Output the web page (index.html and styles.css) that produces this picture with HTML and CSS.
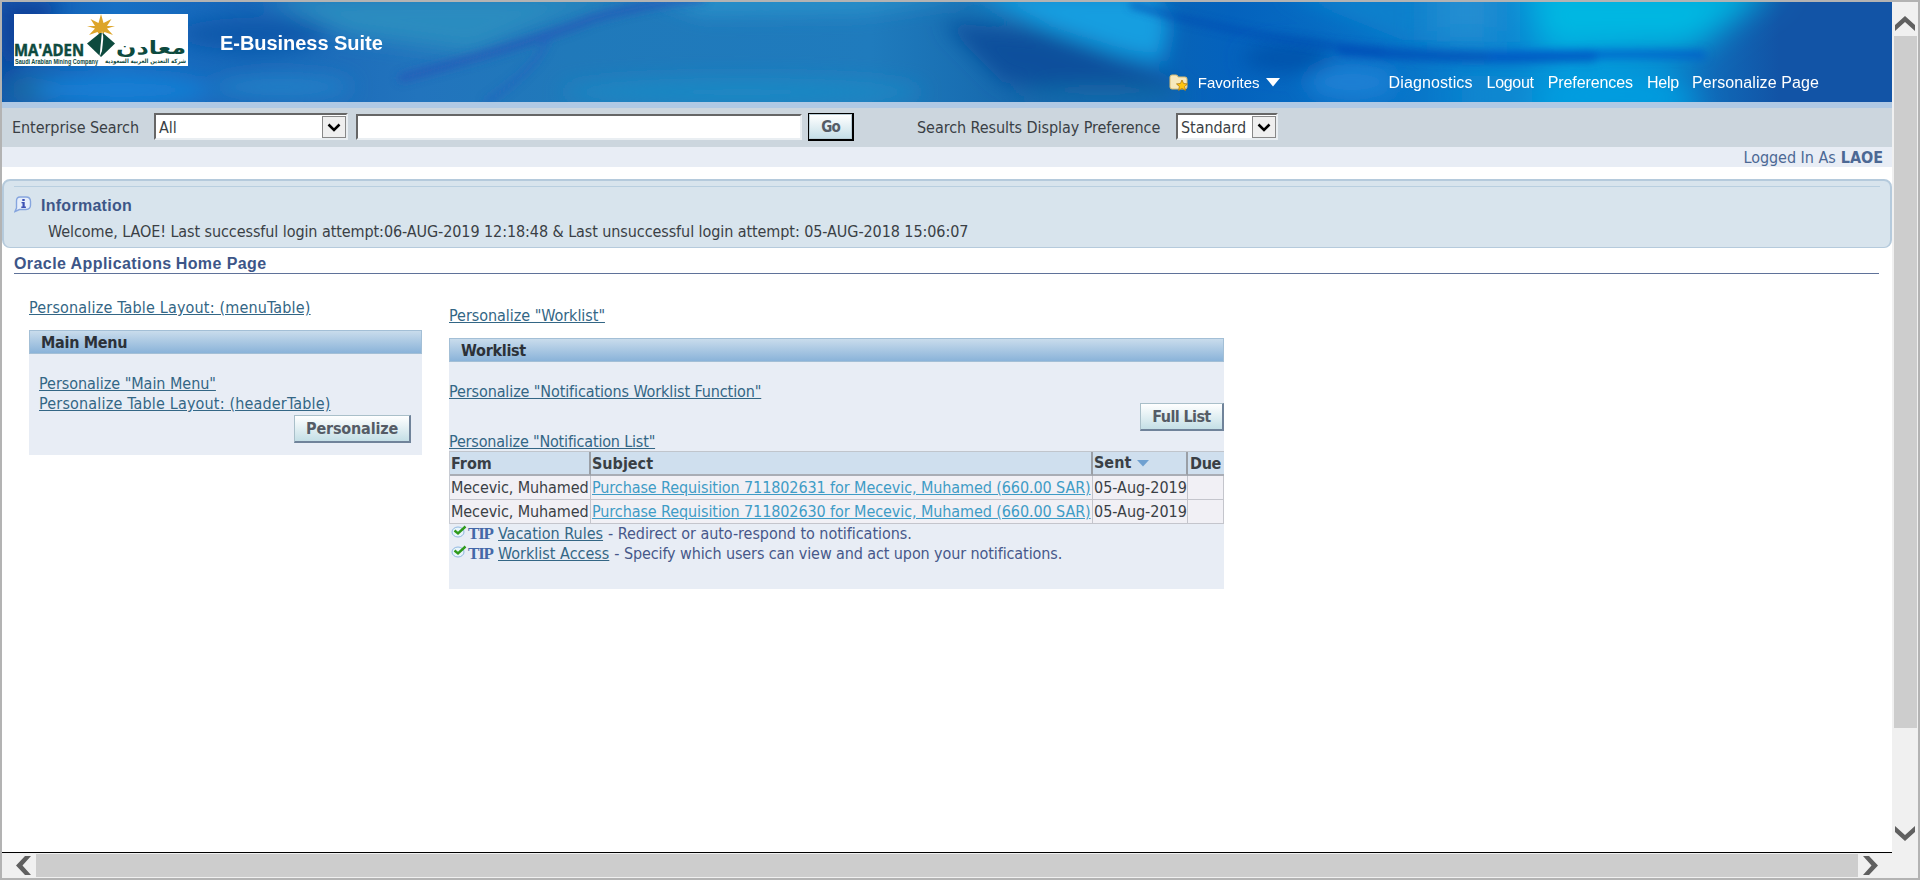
FILE: index.html
```html
<!DOCTYPE html>
<html lang="en">
<head>
<meta charset="utf-8">
<title>Oracle Applications Home Page</title>
<link rel="stylesheet" href="styles.css">
</head>
<body>
<div class="window">
  <div class="page">
    <header class="banner">
      <svg class="banner-art" viewBox="0 0 1890 100" preserveAspectRatio="none">
        <defs>
          <linearGradient id="base" x1="0" x2="1">
            <stop offset="0" stop-color="#115aae"/><stop offset=".06" stop-color="#166fc4"/>
            <stop offset=".13" stop-color="#1866b8"/><stop offset=".22" stop-color="#2274bd"/>
            <stop offset=".3" stop-color="#2079ba"/><stop offset=".46" stop-color="#1f7bbd"/>
            <stop offset=".54" stop-color="#1567ac"/><stop offset=".6" stop-color="#0a64b4"/>
            <stop offset=".65" stop-color="#0462bd"/><stop offset=".74" stop-color="#0874c8"/>
            <stop offset=".83" stop-color="#0890d6"/><stop offset=".9" stop-color="#0f6cba"/>
            <stop offset=".94" stop-color="#1254a6"/><stop offset="1" stop-color="#1254a6"/>
          </linearGradient>
          <filter id="b3" x="-20%" y="-50%" width="140%" height="200%"><feGaussianBlur stdDeviation="4"/></filter>
          <filter id="b8" x="-30%" y="-80%" width="160%" height="260%"><feGaussianBlur stdDeviation="10"/></filter>
          <filter id="b16" x="-50%" y="-100%" width="200%" height="300%"><feGaussianBlur stdDeviation="16"/></filter>
        </defs>
        <rect width="1890" height="100" fill="url(#base)"/>
        <g filter="url(#b8)">
          <path d="M0 0H60L12 60L0 100Z" fill="#0b3f99"/>
          <ellipse cx="40" cy="88" rx="38" ry="14" fill="#1a6aa4"/>
          <ellipse cx="120" cy="88" rx="90" ry="14" fill="#1580d6"/>
          <ellipse cx="250" cy="32" rx="75" ry="16" fill="#1058aa"/>
          <path d="M260 -5H630L560 12L470 50L350 34Z" fill="#2c8cc0"/>
          <ellipse cx="280" cy="85" rx="70" ry="12" fill="#2380c8"/>
          <path d="M640 -10H1000L860 10L700 12Z" fill="#2b93cb"/>
          <ellipse cx="740" cy="90" rx="180" ry="14" fill="#1c88c4"/>
          <path d="M940 20L1040 30L1150 70L1180 85L1090 92L1000 80Z" fill="#0c509c"/>
          <ellipse cx="1100" cy="92" rx="85" ry="10" fill="#186aa8"/>
          <path d="M960 -10H1150L1168 20L1160 60L1120 52L1050 28Z" fill="#129ee0"/>
          <ellipse cx="1285" cy="56" rx="45" ry="15" fill="#0652ac"/>
          <ellipse cx="1350" cy="80" rx="45" ry="18" fill="#1c80d4"/>
          <path d="M1280 -10H1480V40L1400 38Z" fill="#0880cc"/>
        </g>
        <g filter="url(#b16)">
          <path d="M1430 -20H1500V40H1430Z" fill="#238ed2"/>
          <path d="M1525 -20H1780L1690 48H1540Z" fill="#00b8e2"/>
          <path d="M1540 75Q1620 55 1680 75L1700 120H1530Z" fill="#009ee0"/>
          <path d="M1460 75H1530V110H1460Z" fill="#1088d0"/>
        </g>
        <g filter="url(#b3)" fill="none" stroke-linecap="round">
          <path d="M400 76Q540 38 590 17Q640 2 700 -4" stroke="#2458b8" stroke-width="8" opacity=".8"/>
          <path d="M545 33Q545 58 485 100" stroke="#2361be" stroke-width="6" opacity=".65"/>
          <path d="M1130 3Q1270 42 1380 48" stroke="#034ab2" stroke-width="5" opacity=".85"/>
          <path d="M1340 48Q1450 58 1590 54" stroke="#064cb6" stroke-width="11" opacity=".8"/>
          <path d="M1490 54Q1600 51 1700 53" stroke="#035ac8" stroke-width="9" opacity=".75"/>
        </g>
      </svg>
      <svg class="logo" viewBox="0 0 174 52">
        <rect width="174" height="52" fill="#fff"/>
        <path d="M87 0l2.500 9 8-4-4.500 7h8l-8 2.500 6 6.500-8.500-3-3.500 5-3.500-5-8.500 3 6-6.500-8-2.500h8l-4.500-7 8 4z" fill="#dda52a"/>
        <path d="M86 19L73 29.500L87 43L101 29.500L89 19Z" fill="#0d4a3e"/>
        <path d="M88 17L85.500 43L91 30Z" fill="#fff"/>
        <path d="M89.500 22L87.500 42L95 33Z" fill="#0d4a3e"/>
        <text x="0" y="41.500" class="logo-name" textLength="70" lengthAdjust="spacingAndGlyphs">MA'ADEN</text>
        <text x="1" y="50" class="logo-sub" textLength="83" lengthAdjust="spacingAndGlyphs">Saudi Arabian Mining Company</text>
        <text x="102" y="40" class="logo-ar" textLength="70" lengthAdjust="spacingAndGlyphs">معادن</text>
        <text x="91" y="49" class="logo-ar-sub" textLength="81" lengthAdjust="spacingAndGlyphs">شركة التعدين العربية السعودية</text>
      </svg>
      <h1 class="suite">E-Business Suite</h1>
      <nav class="top-nav">
        <a class="fav">
          <svg class="fav-icon" width="20" height="18" viewBox="0 0 20 18"><path d="M1 3Q1 1 3 1H7Q9 1 9 3H16Q18 3 18 5V13Q18 15 16 15H3Q1 15 1 13Z" fill="#f7e9bd" stroke="#d9bd72"/><path d="M13 6l1.600 3.500 3.900.4-2.900 2.600.8 3.900-3.400-2-3.400 2 .8-3.900-2.900-2.600 3.900-.4z" fill="#ffc50d" stroke="#b07a10" stroke-width=".8"/></svg>
          <span class="fav-label">Favorites</span>
          <svg width="14" height="9" viewBox="0 0 14 9"><path d="M0 0H14L7 8.500Z" fill="#fff"/></svg>
        </a>
        <a class="nv-diag">Diagnostics</a><a class="nv-out">Logout</a><a class="nv-pref">Preferences</a><a class="nv-help">Help</a><a class="nv-page">Personalize Page</a>
      </nav>
    </header>

    <div class="search-bar">
      <span class="search-label">Enterprise Search</span>
      <div class="select select-all"><span>All</span><i class="drop"><svg width="14" height="9" viewBox="0 0 14 9"><path d="M1.500 1.500L7 7L12.500 1.500" fill="none" stroke="#000" stroke-width="2.500"/></svg></i></div>
      <div class="search-input"></div>
      <button class="go"><span>Go</span></button>
      <span class="pref-label">Search Results Display Preference</span>
      <div class="select select-std"><span>Standard</span><i class="drop"><svg width="14" height="9" viewBox="0 0 14 9"><path d="M1.500 1.500L7 7L12.500 1.500" fill="none" stroke="#000" stroke-width="2.500"/></svg></i></div>
    </div>
    <div class="user-bar"><span>Logged In As</span> <b>LAOE</b></div>

    <section class="info">
      <div class="info-head">
        <svg width="18" height="17" viewBox="0 0 18 17"><path d="M6 1H12Q16.500 1 16.500 5.500V9Q16.500 13.500 12 13.500H5.500L1 15.500L2.500 12V5Q2.500 1 6 1Z" fill="#e6eefb" stroke="#86a5de" stroke-width="1.400"/><path d="M8.300 3h2.400v2H8.300zM7.500 6h3.200v4.500h1.200V12H7.300v-1.500h1.200V7.200h-1z" fill="#3c50b4"/></svg>
        <h2>Information</h2>
      </div>
      <p>Welcome, LAOE! Last successful login attempt:06-AUG-2019 12:18:48 &amp; Last unsuccessful login attempt: 05-AUG-2018 15:06:07</p>
    </section>

    <h2 class="title"><span>Oracle Applications</span><span>Home Page</span></h2>

    <main class="columns">
      <section class="menu-col">
        <a class="link wide">Personalize Table Layout: (menuTable)</a>
        <div class="panel menu-panel">
          <h3 class="panel-head">Main Menu</h3>
          <div class="menu-links">
            <a class="link main-link">Personalize "Main Menu"</a>
            <a class="link wide">Personalize Table Layout: (headerTable)</a>
          </div>
          <button class="btn btn-personalize">Personalize</button>
        </div>
      </section>
      <section class="work-col">
        <a class="link main-link">Personalize "Worklist"</a>
        <div class="panel work-panel">
          <h3 class="panel-head">Worklist</h3>
          <a class="link fn-link">Personalize "Notifications Worklist Function"</a>
          <button class="btn btn-full">Full List</button>
          <a class="link list-link">Personalize "Notification List"</a>
          <div class="grid">
            <div class="th">From</div><div class="th">Subject</div><div class="th sent">Sent <svg width="14" height="8" viewBox="0 0 14 8"><path d="M1 1H13L7 7.500Z" fill="#6fa0d0"/></svg></div><div class="th due">Due</div>
            <div class="td from">Mecevic, Muhamed</div><div class="td"><a class="req">Purchase Requisition 711802631 for Mecevic, Muhamed (660.00 SAR)</a></div><div class="td">05-Aug-2019</div><div class="td"></div>
            <div class="td from">Mecevic, Muhamed</div><div class="td"><a class="req">Purchase Requisition 711802630 for Mecevic, Muhamed (660.00 SAR)</a></div><div class="td">05-Aug-2019</div><div class="td"></div>
          </div>
          <div class="tip">
            <svg width="16" height="14" viewBox="0 0 16 14"><ellipse cx="7" cy="7" rx="6" ry="5" fill="#e8f4fb" stroke="#8fb8e0"/><path d="M3.500 5.500L7 8.500L14.500 1.500" fill="none" stroke="#2f9a1c" stroke-width="2.400"/></svg>
            <b>TIP</b><a class="link">Vacation Rules</a><span>- Redirect or auto-respond to notifications.</span>
          </div>
          <div class="tip">
            <svg width="16" height="14" viewBox="0 0 16 14"><ellipse cx="7" cy="7" rx="6" ry="5" fill="#e8f4fb" stroke="#8fb8e0"/><path d="M3.500 5.500L7 8.500L14.500 1.500" fill="none" stroke="#2f9a1c" stroke-width="2.400"/></svg>
            <b>TIP</b><a class="link">Worklist Access</a><span class="tip-long">- Specify which users can view and act upon your notifications.</span>
          </div>
        </div>
      </section>
    </main>
  </div>

  <div class="vscroll">
    <svg width="20" height="16" viewBox="0 0 20 16"><path d="M0 15V9L10 0L20 9V15L10 6Z" fill="#606060"/></svg>
    <div class="vthumb"></div>
    <svg width="20" height="16" viewBox="0 0 20 16"><path d="M0 1V7L10 16L20 7V1L10 10Z" fill="#606060"/></svg>
  </div>
  <div class="hscroll">
    <svg width="16" height="19" viewBox="0 0 16 19"><path d="M15 0H9L0 9.500L9 19H15L6.500 9.500Z" fill="#606060"/></svg>
    <div class="hthumb"></div>
    <svg width="16" height="19" viewBox="0 0 16 19"><path d="M1 0H7L16 9.500L7 19H1L9.500 9.500Z" fill="#606060"/></svg>
  </div>
</div>
</body>
</html>
```
FILE: styles.css
```css
* { box-sizing: border-box; }
body { margin: 0; background: #fff; font: 16px/20px "DejaVu Sans Condensed", "Noto Sans", sans-serif; color: #3a3f45; white-space: nowrap; }
h1, h2, h3, p { margin: 0; }
svg { display: block; flex: none; }
button { font: inherit; padding: 0; margin: 0; }

.window { width: 1920px; height: 880px; border: 2px solid #b3b3b3; display: grid; grid-template: 851px 25px / 1890px 26px; overflow: hidden; background: #f0f0f0; }
.page { background: #fff; border-bottom: 1px solid #000; overflow: hidden; }

.banner { position: relative; height: 100px; display: flex; align-items: flex-start; color: #fff; font-family: "Liberation Sans", Arial, sans-serif; }
.banner-art { position: absolute; inset: 0; width: 100%; height: 100%; }
.logo { position: relative; width: 174px; height: 52px; margin: 12px 0 0 12px; }
.logo text { fill: #0d4a3e; }
.logo-name { font: bold 16px "Open Sans", sans-serif; stroke: #0d4a3e; stroke-width: .5px; }
.logo-sub { font: bold 6.500px "Liberation Sans", sans-serif; }
.logo-ar { font: bold 18px "DejaVu Sans", sans-serif; }
.logo-ar-sub { font: bold 6px "DejaVu Sans", sans-serif; }
.suite { position: relative; margin: 30px 0 0 32px; font-size: 20px; line-height: 23px; letter-spacing: -.04px; }
.top-nav { position: relative; margin: 71px 73px 0 auto; display: flex; }
.fav { display: flex; align-items: center; margin-right: 109px; height: 19px; }
.fav-label { margin: 0 6px 0 9px; font-size: 15px; }
.nv-diag { letter-spacing: .12px; margin-right: 14px; }
.nv-out { letter-spacing: -.3px; margin-right: 14px; }
.nv-pref { letter-spacing: -.1px; margin-right: 14px; }
.nv-help { letter-spacing: -.2px; margin-right: 13px; }
.nv-page { letter-spacing: .1px; }

.search-bar { height: 45px; background: #ccd6de; border-top: 6px solid #b0c9e4; display: flex; align-items: flex-start; padding-left: 10px; }
.search-label, .pref-label { margin-top: 10px; letter-spacing: -.06px; }
.search-label { width: 142px; }
.pref-label { margin-left: 63px; width: 259px; }
.select { margin-top: 5px; height: 27px; background: #fff; border: 2px solid; border-color: #666 #e9eef2 #e9eef2 #666; display: flex; justify-content: space-between; padding: 1px 0 1px 3px; line-height: 24px; }
.select-all { width: 194px; }
.select-std { width: 102px; letter-spacing: -.06px; }
.drop { width: 24px; height: 22px; background: #efefef; border: 1px solid #888; display: grid; place-items: center; }
.search-input { width: 446px; height: 26px; margin: 6px 0 0 8px; background: #fff; border: 2px solid; border-color: #666 #e9eef2 #e9eef2 #666; }
.go { width: 46px; height: 28px; margin: 5px 0 0 6px; border: 1px solid #000; border-width: 1px 2px 2px 1px; background: #b9cdd6; padding: 1px; color: #555c66; font-weight: bold; font-size: 15px; letter-spacing: -1px; }
.go span { display: block; height: 23px; line-height: 24px; background: linear-gradient(#fff, #c6dfe8); }
.user-bar { height: 20px; line-height: 22px; background: #e8edf5; color: #4c6894; display: flex; justify-content: flex-end; gap: 5px; padding-right: 9px; letter-spacing: -.03px; }

.info { margin-top: 12px; height: 69px; background: #d8e4ed; border: 2px solid #b5cadc; border-bottom-width: 1px; border-radius: 8px; padding: 5px 10px 0; }
.info-head { border-top: 1px solid #b9cfe0; display: flex; gap: 9px; padding-top: 9px; }
.info-head h2 { font: bold 16px/19px "Liberation Sans", Arial, sans-serif; color: #3d5688; letter-spacing: .27px; }
.info p { margin: 7px 0 0 34px; letter-spacing: -.08px; }
.title { margin: 5px 13px 0 12px; height: 21px; border-bottom: 1px solid #5f7299; font: bold 16px/22px "Liberation Sans", Arial, sans-serif; color: #3d5688; display: flex; gap: 4px; letter-spacing: .42px; }

.columns { display: flex; align-items: flex-start; }
.menu-col { width: 393px; margin: 24px 27px 0 27px; }
.work-col { width: 775px; margin-top: 32px; }
.link { display: block; width: max-content; color: #336685; text-decoration: underline; letter-spacing: -.11px; }
.wide { letter-spacing: .17px; }
.main-link { letter-spacing: -.04px; }
.panel { background: #e8edf5; }
.panel-head { height: 24px; border: 1px solid #a3bfd6; background: linear-gradient(#c9dcec, #8ab3d9); font-size: 16px; line-height: 24px; letter-spacing: -.28px; padding-left: 11px; color: #2c3138; }
.menu-panel { margin-top: 12px; height: 125px; display: flex; flex-direction: column; }
.menu-links { padding: 20px 0 0 10px; }
.btn { height: 28px; border: 1px solid #a9bfc9; border-right: 2px solid #70839a; border-bottom: 2px solid #70839a; background: linear-gradient(#fff, #c4dfe6); font-weight: bold; color: #555c66; line-height: 23px; }
.btn-personalize { width: 117px; letter-spacing: -.17px; align-self: flex-end; margin: 1px 11px 0 0; }
.work-panel { margin-top: 12px; height: 251px; display: flex; flex-direction: column; }
.fn-link { margin-top: 20px; }
.btn-full { width: 84px; letter-spacing: -.6px; align-self: flex-end; margin-top: 1px; }
.list-link { margin-top: 1px; line-height: 19px; letter-spacing: -.18px; }

.grid { display: grid; grid-template-columns: 141px 502px 95px 36px; grid-template-rows: 24px 24px 24px; border-top: 1px solid #c0c5cc; border-left: 1px solid #c8ccd4; }
.th { background: #cfdfee; font-weight: bold; line-height: 24px; padding-left: 1px; border-bottom: 2px solid #a9adb5; border-right: 2px solid #9a9fa6; }
.due { border-right: 0; letter-spacing: -.3px; padding-left: 2px; }
.sent { display: flex; align-items: center; gap: 5px; }
.td { background: #f1f0f5; padding-left: 1px; line-height: 24px; border-bottom: 1px solid #c4c5cc; border-right: 1px solid #c4c5cc; letter-spacing: -.03px; }
.td.from { letter-spacing: -.1px; }
.req { color: #3f9cc6; text-decoration: underline; letter-spacing: -.09px; }
.tip { display: flex; height: 20px; color: #46588a; padding-left: 2px; letter-spacing: -.04px; }
.tip svg { margin-top: 1px; }
.tip b { width: 30px; margin-left: 1px; font: bold 17px/20px "Liberation Serif", serif; color: #4468a8; letter-spacing: -1.200px; }
.tip .link { letter-spacing: 0; margin-right: 5px; }
.tip .tip-long { letter-spacing: -.1px; }

.vscroll { background: #f0f0f0; display: flex; flex-direction: column; align-items: center; padding-top: 14px; }
.vthumb { width: 23px; height: 692px; margin: 4px 0 97px; background: #cdcdcd; }
.hscroll { grid-column: 1 / 3; display: flex; align-items: flex-start; padding: 1px 0 0 14px; }
.hscroll svg { margin-top: 2px; }
.hthumb { width: 1822px; height: 23px; margin: 0 4px 0 4px; background: #cdcdcd; }
```
